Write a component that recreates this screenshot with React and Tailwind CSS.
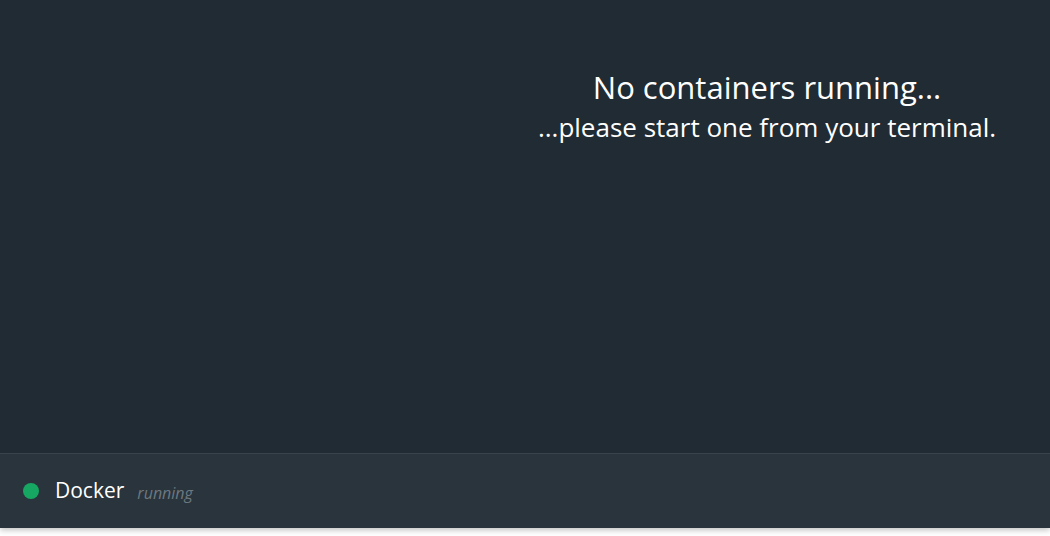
const App = () => {
  return (
    <div
      className="w-[1050px] h-[536px] bg-white"
      style={{ fontFamily: '"Open Sans", sans-serif' }}
    >
      <div className="h-[528px] flex flex-col bg-[#212b33] shadow-[0_2px_6px_rgba(0,0,0,0.25)]">
        {/* Main */}
        <div className="flex flex-1">
          <div className="w-[484px]" />
          <div className="flex-1 pt-[65px] text-center text-white">
            <h1 className="text-[31px] leading-[44px] font-normal">No containers running...</h1>
            <p className="text-[26px] leading-[34px] mt-[1px]">...please start one from your terminal.</p>
          </div>
        </div>

        {/* Status bar */}
        <div className="h-[75px] border-t border-[#38444c] bg-[#29343c] flex items-center pl-[23px]">
          <span className="w-[16px] h-[16px] rounded-full bg-[#16a862]" />
          <span className="ml-[16px] text-[21px] text-white">Docker</span>
          <span className="ml-[13px] mt-[3px] text-[16px] italic text-[#6d7980]">running</span>
        </div>
      </div>
    </div>
  );
};

export default App;
